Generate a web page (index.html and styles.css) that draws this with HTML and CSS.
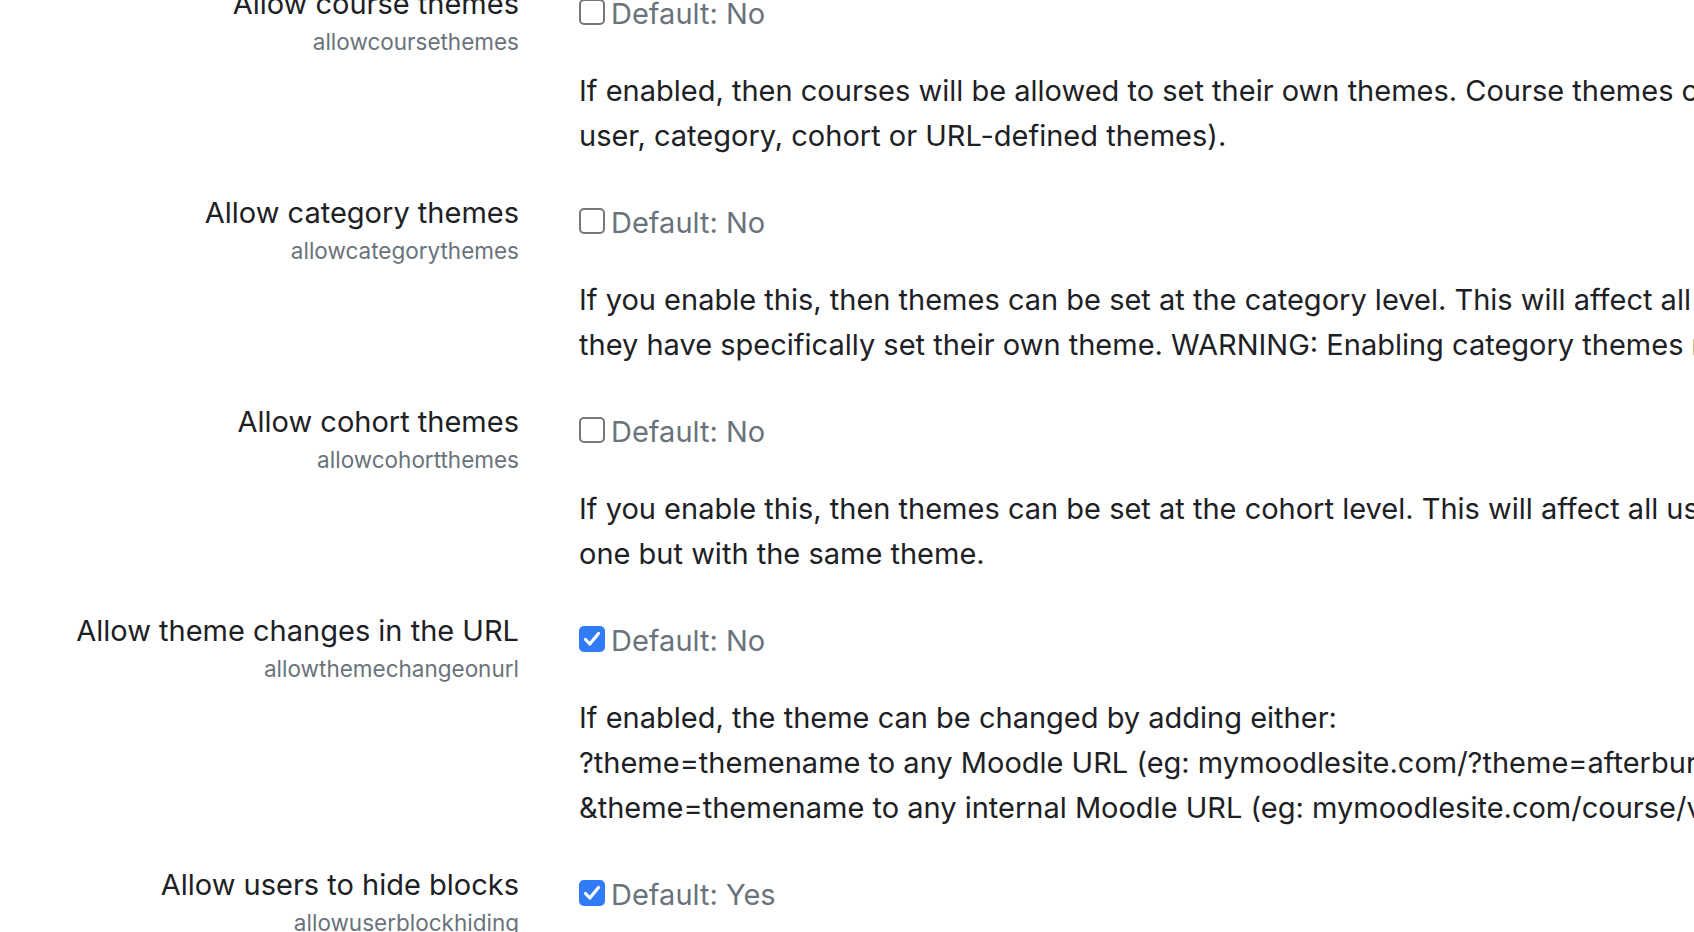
FILE: index.html
```
<html>
  <head>
    <title>Theme settings</title>
    <meta charset="UTF-8" />
    <meta name="viewport" content="width=device-width, initial-scale = 1.0" />
    <link rel="stylesheet" href="styles.css">
  </head>

  <body>
    <div id="settings">

      <div class="form-item">
        <div class="form-label">
          <label>Allow course themes</label>
          <span class="form-shortname">allowcoursethemes</span>
        </div>
        <div class="form-setting">
          <div class="form-check">
            <span class="checkbox"></span>
            <span class="form-defaultinfo">Default: No</span>
          </div>
          <div class="form-description">
            If enabled, then courses will be allowed to set their own themes. Course themes override all other theme choices (site,<br>
            user, category, cohort or URL-defined themes).
          </div>
        </div>
      </div>

      <div class="form-item">
        <div class="form-label">
          <label>Allow category themes</label>
          <span class="form-shortname">allowcategorythemes</span>
        </div>
        <div class="form-setting">
          <div class="form-check">
            <span class="checkbox"></span>
            <span class="form-defaultinfo">Default: No</span>
          </div>
          <div class="form-description">
            If you enable this, then themes can be set at the category level. This will affect all child categories and courses unless<br>
            they have specifically set their own theme. WARNING: Enabling category themes may affect performance.
          </div>
        </div>
      </div>

      <div class="form-item">
        <div class="form-label">
          <label>Allow cohort themes</label>
          <span class="form-shortname">allowcohortthemes</span>
        </div>
        <div class="form-setting">
          <div class="form-check">
            <span class="checkbox"></span>
            <span class="form-defaultinfo">Default: No</span>
          </div>
          <div class="form-description">
            If you enable this, then themes can be set at the cohort level. This will affect all users with only one cohort or more than<br>
            one but with the same theme.
          </div>
        </div>
      </div>

      <div class="form-item">
        <div class="form-label">
          <label>Allow theme changes in the URL</label>
          <span class="form-shortname">allowthemechangeonurl</span>
        </div>
        <div class="form-setting">
          <div class="form-check">
            <span class="checkbox checked">
              <svg viewBox="0 0 26 26" width="26" height="26"><path d="M6.5 13.5 L10.8 18 L19.5 7.5" fill="none" stroke="#fff" stroke-width="3.2" stroke-linecap="round" stroke-linejoin="round"/></svg>
            </span>
            <span class="form-defaultinfo">Default: No</span>
          </div>
          <div class="form-description">
            If enabled, the theme can be changed by adding either:<br>
            ?theme=themename to any Moodle URL (eg: mymoodlesite.com/?theme=afterburner ) or<br>
            &amp;theme=themename to any internal Moodle URL (eg: mymoodlesite.com/course/view.php?id=2&amp;theme=afterburner ).
          </div>
        </div>
      </div>

      <div class="form-item">
        <div class="form-label">
          <label>Allow users to hide blocks</label>
          <span class="form-shortname">allowuserblockhiding</span>
        </div>
        <div class="form-setting">
          <div class="form-check">
            <span class="checkbox checked">
              <svg viewBox="0 0 26 26" width="26" height="26"><path d="M6.5 13.5 L10.8 18 L19.5 7.5" fill="none" stroke="#fff" stroke-width="3.2" stroke-linecap="round" stroke-linejoin="round"/></svg>
            </span>
            <span class="form-defaultinfo">Default: Yes</span>
          </div>
          <div class="form-description">
            Allow users to hide/show side blocks throughout this site. This feature uses Javascript and cookies to remember the state<br>
            of each collapsible block, and only affects the user's own view.
          </div>
        </div>
      </div>

    </div>
  </body>
</html>
```

FILE: styles.css
```
body {
  margin: 0;
  background: #ffffff;
  color: #1d2125;
  font-family: Inter, "Liberation Sans", sans-serif;
  font-size: 29px;
  line-height: 45px;
  overflow: hidden;
}

#settings {
  margin-top: -19px;
}

.form-item {
  display: grid;
  grid-template-columns: 519px 1fr;
  column-gap: 60px;
}

/* Left column */
.form-label {
  text-align: right;
  white-space: nowrap;
}

.form-label label {
  display: block;
}

.form-shortname {
  display: block;
  color: #6a737b;
  font-size: 22.5px;
  line-height: 32px;
}

/* Right column */
.form-setting {
  padding-top: 8px;
  white-space: nowrap;
}

.form-check {
  display: flex;
  align-items: center;
  height: 45px;
  margin-top: 2px;
}

.checkbox {
  box-sizing: border-box;
  width: 26px;
  height: 26px;
  margin-top: -3px;
  margin-right: 6px;
  border: 2px solid #73787d;
  border-radius: 5px;
  background: #ffffff;
}

.checkbox.checked {
  border: none;
  background: #2f7cf6;
}

.checkbox svg {
  display: block;
}

.form-defaultinfo {
  color: #6a737b;
}

.form-description {
  margin-top: 32px;
  margin-bottom: 32px;
}
```
